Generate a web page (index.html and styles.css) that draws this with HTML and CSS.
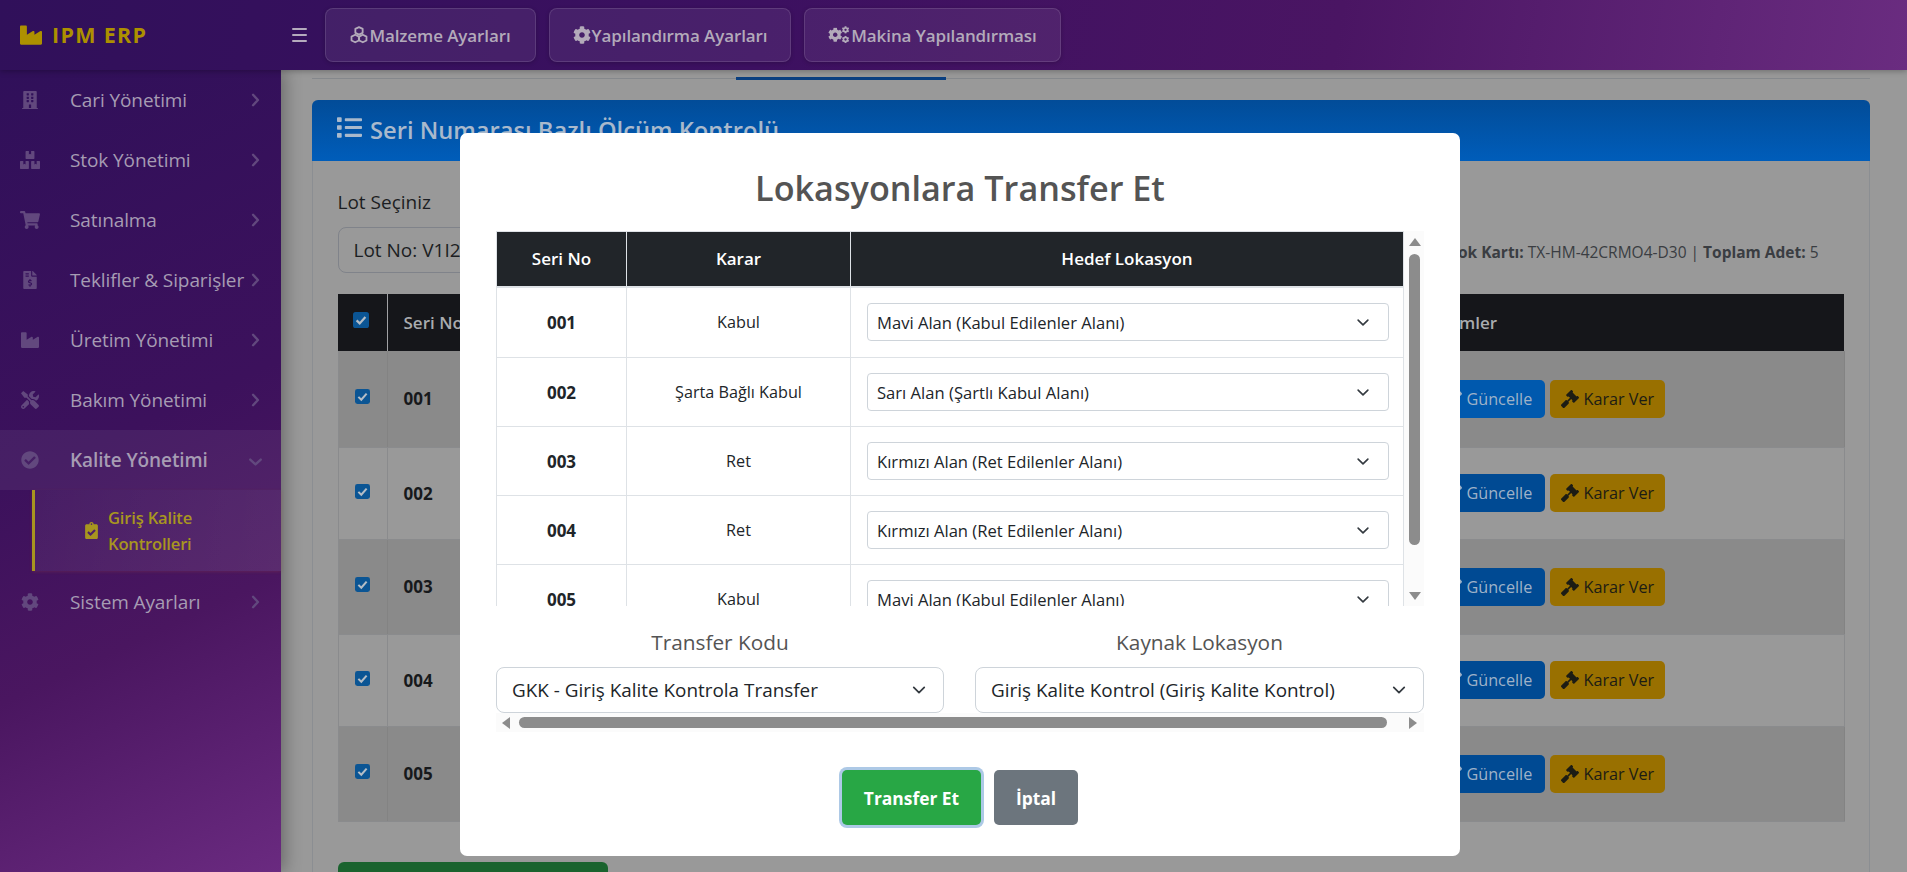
FILE: index.html
```html
<!DOCTYPE html>
<html lang="tr">
<head>
<meta charset="utf-8">
<title>IPM ERP</title>
<link rel="stylesheet" href="styles.css">
</head>
<body>
<svg class="defs" width="0" height="0" aria-hidden="true">
  <symbol id="i-cog" viewBox="0 0 512 512"><path d="M487.4 315.7l-42.6-24.6c4.3-23.2 4.3-47 0-70.2l42.6-24.6c4.9-2.8 7.1-8.6 5.5-14-11.1-35.6-30-67.8-54.7-94.6-3.8-4.1-10-5.1-14.8-2.3L380.8 110c-17.9-15.4-38.5-27.3-60.8-35.1V25.8c0-5.6-3.9-10.5-9.4-11.7-36.7-8.2-74.3-7.8-109.2 0-5.5 1.2-9.4 6.1-9.4 11.7V75c-22.2 7.9-42.8 19.8-60.8 35.1L88.7 85.5c-4.9-2.8-11-1.9-14.8 2.3-24.7 26.7-43.6 58.9-54.7 94.6-1.7 5.4.6 11.2 5.5 14L67.3 221c-4.3 23.2-4.3 47 0 70.2l-42.6 24.6c-4.9 2.8-7.1 8.6-5.5 14 11.1 35.6 30 67.8 54.7 94.6 3.8 4.1 10 5.1 14.8 2.3l42.6-24.6c17.9 15.4 38.5 27.3 60.8 35.1v49.2c0 5.6 3.9 10.5 9.4 11.7 36.7 8.2 74.3 7.8 109.2 0 5.5-1.2 9.4-6.1 9.4-11.7v-49.2c22.2-7.9 42.8-19.8 60.8-35.1l42.6 24.6c4.9 2.8 11 1.9 14.8-2.3 24.7-26.7 43.6-58.9 54.7-94.6 1.5-5.5-.7-11.3-5.6-14.1zM256 336c-44.1 0-80-35.9-80-80s35.9-80 80-80 80 35.9 80 80-35.9 80-80 80z"/></symbol>
  <symbol id="i-chev" viewBox="0 0 12 20"><polyline points="2.5,2.5 9.5,10 2.5,17.5" fill="none" stroke="currentColor" stroke-width="3.4" stroke-linecap="round" stroke-linejoin="round"/></symbol>
  <symbol id="i-gavel" viewBox="0 0 512 512"><path d="M504.971 199.362l-22.627-22.627c-9.373-9.373-24.569-9.373-33.941 0l-5.657 5.657L329.608 69.255l5.657-5.657c9.373-9.373 9.373-24.569 0-33.941L312.638 7.029c-9.373-9.373-24.569-9.373-33.941 0L154.246 131.48c-9.373 9.373-9.373 24.569 0 33.941l22.627 22.627c9.373 9.373 24.569 9.373 33.941 0l5.657-5.657 39.598 39.598-81.04 81.04-5.657-5.657c-12.497-12.497-32.758-12.497-45.255 0L9.373 412.118c-12.497 12.497-12.497 32.758 0 45.255l45.255 45.255c12.497 12.497 32.758 12.497 45.255 0l114.745-114.745c12.497-12.497 12.497-32.758 0-45.255l-5.657-5.657 81.04-81.04 39.598 39.598-5.657 5.657c-9.373 9.373-9.373 24.569 0 33.941l22.627 22.627c9.373 9.373 24.569 9.373 33.941 0l124.451-124.451c9.372-9.372 9.372-24.568 0-33.941z"/></symbol>
  <symbol id="i-edit" viewBox="0 0 576 512"><path d="M402.6 83.2l90.2 90.2c3.8 3.8 3.8 10 0 13.8L274.4 405.6l-92.8 10.3c-12.4 1.4-22.9-9.1-21.5-21.5l10.3-92.8L388.8 83.2c3.8-3.8 10-3.8 13.8 0zm162-22.9l-48.8-48.8c-15.2-15.2-39.9-15.2-55.2 0l-35.4 35.4c-3.8 3.8-3.8 10 0 13.8l90.2 90.2c3.8 3.8 10 3.8 13.8 0l35.4-35.4c15.2-15.3 15.2-40 0-55.2zM384 346.2V448H64V128h229.8c3.2 0 6.2-1.3 8.5-3.5l40-40c7.6-7.6 2.2-20.5-8.5-20.5H48C21.5 64 0 85.5 0 112v352c0 26.5 21.5 48 48 48h352c26.5 0 48-21.5 48-48V306.2c0-10.7-12.9-16-20.5-8.5l-40 40c-2.2 2.3-3.5 5.3-3.5 8.5z"/></symbol>
  <symbol id="i-check" viewBox="0 0 16 16"><rect width="16" height="16" rx="2.6" fill="#0b5594"/><polyline points="3.6,8.4 6.7,11.4 12.4,5" fill="none" stroke="#b4bdc6" stroke-width="2.2"/></symbol>
</svg>

<header class="topbar">
  <div class="brand">
    <svg class="brand-ico" viewBox="0 0 512 512"><path d="M475.115 163.781L336 252.309v-68.28c0-18.916-20.931-30.399-36.885-20.248L160 252.309V56c0-13.255-10.745-24-24-24H24C10.745 32 0 42.745 0 56v400c0 13.255 10.745 24 24 24h464c13.255 0 24-10.745 24-24V184.029c0-18.917-20.931-30.399-36.885-20.248z"/></svg>
    <span class="brand-name">IPM ERP</span>
  </div>
  <span class="burger"><i></i><i></i><i></i></span>
  <nav class="topnav">
    <a class="topbtn w1">
      <svg class="tico" viewBox="0 0 32 32"><g fill="none" stroke="currentColor" stroke-width="3.2" stroke-linejoin="round"><path d="M16 2l6.5 3.2v7L16 15.4 9.5 12.2v-7z"/><path d="M9.2 15.6l6.5 3.2v7l-6.5 3.2-6.5-3.2v-7z"/><path d="M22.8 15.6l6.5 3.2v7l-6.5 3.2-6.5-3.2v-7z"/></g></svg>Malzeme Ayarları</a>
    <a class="topbtn w2"><svg class="tico"><use href="#i-cog"/></svg>Yapılandırma Ayarları</a>
    <a class="topbtn w3">
      <svg class="tico tico-w" viewBox="0 0 32 26"><use href="#i-cog" x="0" y="2" width="21" height="21"/><use href="#i-cog" x="20" y="0" width="11" height="11"/><use href="#i-cog" x="20" y="14" width="11" height="11"/></svg>Makina Yapılandırması</a>
  </nav>
</header>

<div class="shell">
  <aside class="sidebar">
    <a class="side-item"><svg class="side-ico" viewBox="0 0 448 512"><path d="M436 480h-20V24c0-13.255-10.745-24-24-24H56C42.745 0 32 10.745 32 24v456H12c-6.627 0-12 5.373-12 12v20h448v-20c0-6.627-5.373-12-12-12zM128 76c0-6.627 5.373-12 12-12h40c6.627 0 12 5.373 12 12v40c0 6.627-5.373 12-12 12h-40c-6.627 0-12-5.373-12-12V76zm0 96c0-6.627 5.373-12 12-12h40c6.627 0 12 5.373 12 12v40c0 6.627-5.373 12-12 12h-40c-6.627 0-12-5.373-12-12v-40zm52 148h-40c-6.627 0-12-5.373-12-12v-40c0-6.627 5.373-12 12-12h40c6.627 0 12 5.373 12 12v40c0 6.627-5.373 12-12 12zm76 160h-64v-84c0-6.627 5.373-12 12-12h40c6.627 0 12 5.373 12 12v84zm64-172c0 6.627-5.373 12-12 12h-40c-6.627 0-12-5.373-12-12v-40c0-6.627 5.373-12 12-12h40c6.627 0 12 5.373 12 12v40zm0-96c0 6.627-5.373 12-12 12h-40c-6.627 0-12-5.373-12-12v-40c0-6.627 5.373-12 12-12h40c6.627 0 12 5.373 12 12v40zm0-96c0 6.627-5.373 12-12 12h-40c-6.627 0-12-5.373-12-12V76c0-6.627 5.373-12 12-12h40c6.627 0 12 5.373 12 12v40z"/></svg><span class="side-text">Cari Yönetimi</span><svg class="side-chev"><use href="#i-chev"/></svg></a>
    <a class="side-item"><svg class="side-ico" viewBox="0 0 576 512"><path d="M560 288h-80v96l-32-21.3-32 21.3v-96h-80c-8.8 0-16 7.2-16 16v192c0 8.8 7.2 16 16 16h224c8.8 0 16-7.2 16-16V304c0-8.8-7.2-16-16-16zm-384-64h224c8.8 0 16-7.2 16-16V16c0-8.8-7.2-16-16-16h-80v96l-32-21.3L256 96V0h-80c-8.8 0-16 7.2-16 16v192c0 8.8 7.2 16 16 16zm64 64h-80v96l-32-21.3L96 384v-96H16c-8.8 0-16 7.2-16 16v192c0 8.8 7.2 16 16 16h224c8.8 0 16-7.2 16-16V304c0-8.8-7.2-16-16-16z"/></svg><span class="side-text">Stok Yönetimi</span><svg class="side-chev"><use href="#i-chev"/></svg></a>
    <a class="side-item"><svg class="side-ico" viewBox="0 0 576 512"><path d="M528.12 301.319l47.273-208C578.806 78.301 567.391 64 551.99 64H159.208l-9.166-44.81C147.758 8.021 137.93 0 126.529 0H24C10.745 0 0 10.745 0 24v16c0 13.255 10.745 24 24 24h69.883l70.248 343.435C147.325 417.1 136 435.222 136 456c0 30.928 25.072 56 56 56s56-25.072 56-56c0-15.674-6.447-29.835-16.824-40h209.647C430.447 426.165 424 440.326 424 456c0 30.928 25.072 56 56 56s56-25.072 56-56c0-22.172-12.888-41.332-31.579-50.405l5.517-24.276c3.413-15.018-8.002-29.319-23.403-29.319H218.117l-6.545-32h293.145c11.206 0 20.92-7.754 23.403-18.681z"/></svg><span class="side-text">Satınalma</span><svg class="side-chev"><use href="#i-chev"/></svg></a>
    <a class="side-item"><svg class="side-ico" viewBox="0 0 384 512"><path d="M377 105L279.1 7c-4.5-4.5-10.6-7-17-7H256v128h128v-6.1c0-6.3-2.5-12.4-7-16.9zm-153 31V0H24C10.7 0 0 10.7 0 24v464c0 13.3 10.7 24 24 24h336c13.3 0 24-10.7 24-24V160H248c-13.2 0-24-10.8-24-24zM64 72c0-4.42 3.58-8 8-8h80c4.42 0 8 3.58 8 8v16c0 4.42-3.58 8-8 8H72c-4.42 0-8-3.58-8-8V72zm0 80v-16c0-4.42 3.58-8 8-8h80c4.42 0 8 3.58 8 8v16c0 4.42-3.58 8-8 8H72c-4.42 0-8-3.58-8-8zm144 263.88V440c0 4.42-3.58 8-8 8h-16c-4.42 0-8-3.58-8-8v-24.29c-11.29-.58-22.27-4.52-31.37-11.35-3.9-2.93-4.1-8.77-.57-12.14l11.75-11.21c2.77-2.64 6.89-2.76 10.13-.73 3.87 2.42 8.26 3.72 12.82 3.72h28.11c6.5 0 11.8-5.92 11.8-13.19 0-5.95-3.61-11.19-8.77-12.73l-45-13.5c-18.59-5.58-31.58-23.42-31.58-43.39 0-24.52 19.05-44.44 42.67-45.07V232c0-4.42 3.58-8 8-8h16c4.42 0 8 3.58 8 8v24.29c11.29.58 22.27 4.51 31.37 11.35 3.9 2.93 4.1 8.77.57 12.14l-11.75 11.21c-2.77 2.64-6.89 2.76-10.13.73-3.87-2.43-8.26-3.72-12.82-3.72h-28.11c-6.5 0-11.8 5.92-11.8 13.19 0 5.95 3.61 11.19 8.77 12.73l45 13.5c18.59 5.58 31.58 23.42 31.58 43.39 0 24.53-19.05 44.44-42.67 45.07z"/></svg><span class="side-text">Teklifler &amp; Siparişler</span><svg class="side-chev"><use href="#i-chev"/></svg></a>
    <a class="side-item"><svg class="side-ico" viewBox="0 0 512 512"><path d="M475.115 163.781L336 252.309v-68.28c0-18.916-20.931-30.399-36.885-20.248L160 252.309V56c0-13.255-10.745-24-24-24H24C10.745 32 0 42.745 0 56v400c0 13.255 10.745 24 24 24h464c13.255 0 24-10.745 24-24V184.029c0-18.917-20.931-30.399-36.885-20.248z"/></svg><span class="side-text">Üretim Yönetimi</span><svg class="side-chev"><use href="#i-chev"/></svg></a>
    <a class="side-item"><svg class="side-ico" viewBox="0 0 512 512"><path d="M501.1 395.7L384 278.6c-23.1-23.1-57.6-27.6-85.4-13.9L192 158.1V96L64 0 0 64l96 128h62.1l106.6 106.6c-13.6 27.8-9.2 62.3 13.9 85.4l117.1 117.1c14.6 14.6 38.2 14.6 52.7 0l52.7-52.7c14.5-14.6 14.5-38.2 0-52.7zM331.7 225c28.3 0 54.9 11 74.9 31l19.4 19.4c15.8-6.9 30.8-16.5 43.8-29.5 37.1-37.1 49.7-89.3 37.9-136.7-2.2-9-13.5-12.1-20.1-5.5l-74.4 74.4-67.9-11.3L334 98.9l74.4-74.4c6.6-6.6 3.4-17.9-5.7-20.2-47.4-11.7-99.6.9-136.6 37.9-28.5 28.5-41.9 66.1-41.2 103.6l82.1 82.1c8.1-1.9 16.5-2.9 24.7-2.9zm-103.9 82l-56.7-56.7L18.7 402.8c-25 25-25 65.5 0 90.5s65.5 25 90.5 0l123.6-123.6c-7.6-19.9-9.9-41.6-5-62.7zM64 472c-13.2 0-24-10.8-24-24 0-13.3 10.7-24 24-24s24 10.7 24 24c0 13.2-10.7 24-24 24z"/></svg><span class="side-text">Bakım Yönetimi</span><svg class="side-chev"><use href="#i-chev"/></svg></a>
    <a class="side-item open"><svg class="side-ico" viewBox="0 0 512 512"><path d="M504 256c0 136.967-111.033 248-248 248S8 392.967 8 256 119.033 8 256 8s248 111.033 248 248zM227.314 387.314l184-184c6.248-6.248 6.248-16.379 0-22.627l-22.627-22.627c-6.248-6.249-16.379-6.249-22.628 0L216 308.118l-70.059-70.059c-6.248-6.248-16.379-6.248-22.628 0l-22.627 22.627c-6.248 6.248-6.248 16.379 0 22.627l104 104c6.249 6.25 16.379 6.25 22.628.001z"/></svg><span class="side-text">Kalite Yönetimi</span><svg class="side-chev down"><use href="#i-chev"/></svg></a>
    <a class="side-sub"><svg class="sub-ico" viewBox="0 0 384 512"><path d="M336 64h-80c0-35.3-28.7-64-64-64s-64 28.7-64 64H48C21.5 64 0 85.5 0 112v352c0 26.5 21.5 48 48 48h288c26.5 0 48-21.5 48-48V112c0-26.5-21.5-48-48-48zM192 40c13.3 0 24 10.7 24 24s-10.7 24-24 24-24-10.7-24-24 10.7-24 24-24zm121.2 231.8l-143 141.8c-4.7 4.7-12.3 4.6-17-.1l-82.6-83.3c-4.7-4.7-4.6-12.3.1-17L99.1 285c4.7-4.7 12.3-4.6 17 .1l46 46.4 106-105.2c4.7-4.7 12.3-4.6 17 .1l28.2 28.4c4.7 4.8 4.6 12.3-.1 17z"/></svg><span class="sub-text">Giriş Kalite Kontrolleri</span></a>
    <a class="side-item"><svg class="side-ico"><use href="#i-cog"/></svg><span class="side-text">Sistem Ayarları</span><svg class="side-chev"><use href="#i-chev"/></svg></a>
  </aside>

  <main class="content">
    <div class="tabline"><span class="tab-active"></span></div>
    <section class="card">
      <div class="card-head">
        <svg class="list-ico" viewBox="0 0 512 512"><path d="M80 368H16a16 16 0 0 0-16 16v64a16 16 0 0 0 16 16h64a16 16 0 0 0 16-16v-64a16 16 0 0 0-16-16zm0-320H16A16 16 0 0 0 0 64v64a16 16 0 0 0 16 16h64a16 16 0 0 0 16-16V64a16 16 0 0 0-16-16zm0 160H16a16 16 0 0 0-16 16v64a16 16 0 0 0 16 16h64a16 16 0 0 0 16-16v-64a16 16 0 0 0-16-16zm416 176H176a16 16 0 0 0-16 16v32a16 16 0 0 0 16 16h320a16 16 0 0 0 16-16v-32a16 16 0 0 0-16-16zm0-320H176a16 16 0 0 0-16 16v32a16 16 0 0 0 16 16h320a16 16 0 0 0 16-16V80a16 16 0 0 0-16-16zm0 160H176a16 16 0 0 0-16 16v32a16 16 0 0 0 16 16h320a16 16 0 0 0 16-16v-32a16 16 0 0 0-16-16z"/></svg>
        <span class="card-title">Seri Numarası Bazlı Ölçüm Kontrolü</span>
      </div>
      <div class="card-body">
        <label class="lot-label">Lot Seçiniz</label>
        <div class="lot-row">
          <div class="lot-select">Lot No: V1I2</div>
          <p class="lot-info"><b>Stok Kartı:</b> TX-HM-42CRMO4-D30 | <b>Toplam Adet:</b> 5</p>
        </div>
        <table class="grid">
          <thead><tr><th class="c1"><svg class="chk chk-h"><use href="#i-check"/></svg></th><th class="c2">Seri No</th><th class="c3">İşlemler</th></tr></thead>
          <tbody>
            <tr class="h96"><td class="c1"><svg class="chk"><use href="#i-check"/></svg></td><td class="c2 sn">001</td><td class="c3"><div class="acts"><a class="btn-up hot"><svg class="b-ico"><use href="#i-edit"/></svg>Güncelle</a><a class="btn-kv"><svg class="b-ico"><use href="#i-gavel"/></svg>Karar Ver</a></div></td></tr>
            <tr class="h92"><td class="c1"><svg class="chk"><use href="#i-check"/></svg></td><td class="c2 sn">002</td><td class="c3"><div class="acts"><a class="btn-up"><svg class="b-ico"><use href="#i-edit"/></svg>Güncelle</a><a class="btn-kv"><svg class="b-ico"><use href="#i-gavel"/></svg>Karar Ver</a></div></td></tr>
            <tr class="h95"><td class="c1"><svg class="chk"><use href="#i-check"/></svg></td><td class="c2 sn">003</td><td class="c3"><div class="acts"><a class="btn-up"><svg class="b-ico"><use href="#i-edit"/></svg>Güncelle</a><a class="btn-kv"><svg class="b-ico"><use href="#i-gavel"/></svg>Karar Ver</a></div></td></tr>
            <tr class="h92"><td class="c1"><svg class="chk"><use href="#i-check"/></svg></td><td class="c2 sn">004</td><td class="c3"><div class="acts"><a class="btn-up"><svg class="b-ico"><use href="#i-edit"/></svg>Güncelle</a><a class="btn-kv"><svg class="b-ico"><use href="#i-gavel"/></svg>Karar Ver</a></div></td></tr>
            <tr class="h95"><td class="c1"><svg class="chk"><use href="#i-check"/></svg></td><td class="c2 sn">005</td><td class="c3"><div class="acts"><a class="btn-up"><svg class="b-ico"><use href="#i-edit"/></svg>Güncelle</a><a class="btn-kv"><svg class="b-ico"><use href="#i-gavel"/></svg>Karar Ver</a></div></td></tr>
          </tbody>
        </table>
        <div class="green-btn"></div>
      </div>
    </section>
  </main>
</div>

<div class="modal" role="dialog">
  <h2 class="modal-title">Lokasyonlara Transfer Et</h2>
  <div class="modal-inner">
    <div class="m-scroll">
      <div class="m-view">
        <table class="m-table">
          <thead><tr><th class="mc1">Seri No</th><th class="mc2">Karar</th><th class="mc3">Hedef Lokasyon</th></tr></thead>
          <tbody>
            <tr><td class="sn2">001</td><td>Kabul</td><td class="m-sel-cell"><select class="sel-sm"><option>Mavi Alan (Kabul Edilenler Alanı)</option></select></td></tr>
            <tr><td class="sn2">002</td><td>Şarta Bağlı Kabul</td><td class="m-sel-cell"><select class="sel-sm"><option>Sarı Alan (Şartlı Kabul Alanı)</option></select></td></tr>
            <tr><td class="sn2">003</td><td>Ret</td><td class="m-sel-cell"><select class="sel-sm"><option>Kırmızı Alan (Ret Edilenler Alanı)</option></select></td></tr>
            <tr><td class="sn2">004</td><td>Ret</td><td class="m-sel-cell"><select class="sel-sm"><option>Kırmızı Alan (Ret Edilenler Alanı)</option></select></td></tr>
            <tr><td class="sn2">005</td><td>Kabul</td><td class="m-sel-cell"><select class="sel-sm"><option>Mavi Alan (Kabul Edilenler Alanı)</option></select></td></tr>
          </tbody>
        </table>
      </div>
      <div class="vbar"><i class="arr-up"></i><i class="v-thumb"></i><i class="arr-down"></i></div>
    </div>
    <div class="m-fields">
      <div class="m-field"><label>Transfer Kodu</label><select class="sel-lg"><option>GKK - Giriş Kalite Kontrola Transfer</option></select></div>
      <div class="m-field"><label>Kaynak Lokasyon</label><select class="sel-lg"><option>Giriş Kalite Kontrol (Giriş Kalite Kontrol)</option></select></div>
    </div>
    <div class="hbar"><i class="arr-left"></i><i class="h-thumb"></i><i class="arr-right"></i></div>
  </div>
  <div class="m-actions">
    <button class="m-btn confirm">Transfer Et</button>
    <button class="m-btn cancel">İptal</button>
  </div>
</div>
</body>
</html>
```
FILE: styles.css
```css
* { box-sizing: border-box; }
html, body { margin: 0; height: 872px; overflow: hidden; }
body { font-family: "Open Sans", "Noto Sans", sans-serif; font-size: 16px; background: #999; color: #1a1c1f; position: relative; }
.defs { position: absolute; }
svg { fill: currentColor; display: block; flex: none; }

/* top bar */
.topbar { height: 70px; display: flex; align-items: center; background: linear-gradient(100deg, #30105a 0%, #3c1060 40%, #4a1563 70%, #6a2c80 100%); position: relative; z-index: 2; box-shadow: 0 1px 6px rgba(0,0,0,.3); }
.brand { width: 292px; padding-left: 20px; display: flex; align-items: center; gap: 10px; color: #ad9000; }
.brand-ico { width: 22px; height: 22px; }
.brand-name { font-size: 21.5px; font-weight: 700; letter-spacing: 1.3px; line-height: 1; }
.burger { width: 15px; height: 14px; display: flex; flex-direction: column; justify-content: space-between; }
.burger i { display: block; height: 2.4px; background: #b5abbd; border-radius: 1px; }
.topnav { display: flex; margin-left: 18px; gap: 13px; }
.topbtn { height: 54px; display: flex; align-items: center; justify-content: center; gap: 1px; border: 1px solid rgba(255,255,255,.12); border-radius: 8px; background: rgba(255,255,255,.07); box-shadow: 0 1px 4px rgba(0,0,0,.2); color: #b3aaba; font-weight: 600; font-size: 17px; letter-spacing: -.1px; }
.w1 { width: 211px; }
.w2 { width: 242px; }
.w3 { width: 257px; }
.tico { width: 18px; height: 18px; }
.tico-w { width: 22px; height: 18px; }

/* layout */
.shell { display: flex; height: 802px; }
.sidebar { width: 281px; flex: none; background: linear-gradient(155deg, #30105a 0%, #3c115c 45%, #4a1660 68%, #6a2a80 100%); color: #a69cb3; position: relative; z-index: 1; box-shadow: 4px 0 16px rgba(0,0,0,.3); }
.side-item { height: 60px; display: flex; align-items: center; padding-left: 20px; padding-right: 21px; }
.side-ico { width: 20px; height: 18px; color: #62487e; }
.side-text { font-size: 19px; margin-left: 30px; flex: 1; white-space: nowrap; letter-spacing: -.1px; }
.side-chev { width: 9px; height: 14px; color: #62487e; }
.side-chev.down { transform: rotate(90deg) translateX(2px); }
.open { background: rgba(255,255,255,.06); }
.open .side-text { font-weight: 600; }
.side-sub { margin-left: 32px; height: 81px; margin-bottom: 1px; display: flex; align-items: center; padding-left: 50px; border-left: 3px solid #a8951f; background: linear-gradient(100deg, rgba(255,255,255,.05), rgba(255,255,255,.09)); color: #a8961f; box-shadow: 0 1px 3px rgba(160,70,60,.25); }
.sub-ico { width: 13px; height: 17px; }
.sub-text { width: 110px; margin-left: 10px; font-size: 16.6px; font-weight: 600; line-height: 26px; letter-spacing: -.2px; }

/* content */
.content { flex: 1; padding: 8px 37px 0 31px; }
.tabline { height: 1px; background: #85888c; position: relative; }
.tab-active { position: absolute; left: 424px; top: -1px; width: 210px; height: 3px; background: #0a3f80; }
.card { margin-top: 21px; height: 790px; border: 1px solid #8b8e92; border-top: 0; border-radius: 6px 6px 0 0; }
.card-head { height: 61px; margin: 0 -1px; padding: 10px 0 0 25px; display: flex; align-items: flex-start; gap: 8px; background: linear-gradient(180deg, #024c98, #005dba); border-radius: 6px 6px 0 0; color: #a9b9cc; }
.list-ico { width: 25px; height: 25px; margin-top: 5px; }
.card-title { font-size: 23.7px; line-height: 40px; font-weight: 600; white-space: nowrap; }
.card-body { padding: 29px 24.5px 0; }
.lot-label { display: block; font-size: 19px; line-height: 24px; color: #1c1e22; }
.lot-row { display: flex; justify-content: space-between; align-items: center; margin-top: 13px; height: 46px; padding-right: 26px; }
.lot-select { width: 700px; height: 46px; border: 1px solid #80838a; border-radius: 8px; padding-left: 15px; line-height: 44px; font-size: 19px; color: #1c1e22; }
.lot-info { margin: 4px 0 0; font-size: 15.5px; color: #3a3d42; }
.grid { width: 1507px; margin-top: 21px; border-collapse: collapse; table-layout: fixed; }
.grid th { height: 57px; background: #15161a; color: #a9abae; text-align: left; padding: 0 0 0 16px; font-weight: 600; font-size: 17px; }
.grid td { padding: 0 0 0 16px; border: 1px solid #8a8b8d; border-width: 0 1px 1px 0; }
.grid tr td:first-child { border-left: 1px solid #8a8b8d; }
.grid tbody tr:nth-child(odd) td { background: #8a8a8a; border-right-color: #838383; }
.grid tbody tr:nth-child(even) td { background: #999; }
.grid th.c1 { border-right: 1px solid #a0a1a4; padding-left: 15px; }
.grid .c1 { width: 49px; }
.grid .c3 { width: 429px; }
.h96 { height: 96px; }
.h92 { height: 92px; }
.h95 { height: 95px; }
.chk { width: 15px; height: 15px; transform: translateY(-2px); }
.chk-h { width: 16px; height: 16px; transform: translateY(-3px); }
.sn { font-weight: 700; font-size: 17px; color: #17191c; }
.acts { display: flex; gap: 5px; }
.btn-up, .btn-kv { height: 38px; display: flex; align-items: center; border-radius: 5px; gap: 5px; font-size: 16.2px; white-space: nowrap; }
.btn-up { width: 113px; padding-left: 12px; background: #004a93; color: #9fb2c8; }
.btn-up.hot { background: #0059ae; }
.btn-kv { width: 115px; padding-left: 11px; background: #997000; color: #1c1c14; }
.b-ico { width: 18px; height: 18px; }
.green-btn { width: 270px; height: 60px; margin-top: 40px; background: #1a632e; border-radius: 6px; }

/* modal */
.modal { position: absolute; left: 460px; top: 133px; width: 1000px; height: 723px; background: #fff; border-radius: 7px; z-index: 5; padding-top: 28px; color: #545454; }
.modal-title { margin: 0 0 16px; text-align: center; font-size: 34.2px; line-height: 54px; font-weight: 600; color: #545454; }
.modal-inner { margin-left: 36px; width: 928px; }
.m-scroll { display: flex; height: 375px; overflow: hidden; }
.m-view { flex: 1; min-width: 0; overflow: hidden; }
.m-table { width: 100%; border-collapse: collapse; table-layout: fixed; font-size: 16.2px; color: #212529; }
.m-table th { height: 55px; background: #212529; color: #fff; font-weight: 600; font-size: 17px; border: 1px solid #dee2e6; border-bottom-width: 2px; }
.mc1 { width: 130px; }
.mc2 { width: 224px; }
.m-table td { height: 69px; text-align: center; border: 1px solid #dee2e6; padding: 0; }
.m-table tbody tr:first-child td { height: 71px; }
.m-table .sn2 { font-weight: 700; font-size: 17px; }
.m-table .m-sel-cell { padding: 0 14px 0 16px; }
select { appearance: none; -webkit-appearance: none; display: block; width: 100%; background: #fff url("data:image/svg+xml,%3Csvg xmlns='http://www.w3.org/2000/svg' viewBox='0 0 16 16'%3E%3Cpath fill='none' stroke='%23343a40' stroke-linecap='round' stroke-linejoin='round' stroke-width='2' d='M2 5l6 6 6-6'/%3E%3C/svg%3E") no-repeat; border: 1px solid #ced4da; color: #212529; font-family: inherit; }
.sel-sm { height: 38px; border-radius: 4px; padding: 0 9px; font-size: 16.6px; background-position: right 16px center; background-size: 18px 13px; }
.sel-lg { height: 46px; border-radius: 8px; padding: 0 15px; font-size: 18.9px; background-position: right 14px center; background-size: 20px 14px; }
.vbar { width: 20px; background: #fbfbfb; position: relative; flex: none; }
.v-thumb { position: absolute; left: 5px; top: 23px; width: 11px; height: 291px; background: #8c8c8c; border-radius: 5.5px; }
.arr-up, .arr-down, .arr-left, .arr-right { position: absolute; width: 0; height: 0; border-style: solid; border-color: transparent; }
.arr-up { left: 4.5px; top: 7px; border-width: 0 6px 8px; border-bottom-color: #8c8c8c; }
.arr-down { left: 4.5px; top: 361px; border-width: 8px 6px 0; border-top-color: #8c8c8c; }
.m-fields { display: grid; grid-template-columns: 448px 449px; column-gap: 31px; margin-top: 21px; }
.m-field label { display: block; text-align: center; font-size: 20.8px; line-height: 30px; margin-bottom: 10px; color: #545454; }
.hbar { height: 19px; background: #fbfbfb; position: relative; }
.h-thumb { position: absolute; left: 23px; top: 4px; width: 868px; height: 11px; background: #8c8c8c; border-radius: 5.5px; }
.arr-left { left: 6px; top: 4px; border-width: 6px 8px 6px 0; border-right-color: #8c8c8c; }
.arr-right { left: 912.5px; top: 4px; border-width: 6px 0 6px 8px; border-left-color: #8c8c8c; }
.m-actions { display: flex; justify-content: center; gap: 13px; margin-top: 38px; }
.m-btn { height: 55px; border: 0; border-radius: 5px; color: #fff; font-family: inherit; font-weight: 700; font-size: 17.4px; }
.confirm { width: 139px; background: #28a745; box-shadow: 0 0 0 3px #adc9e6; }
.cancel { width: 84px; background: #6c757d; }
```
